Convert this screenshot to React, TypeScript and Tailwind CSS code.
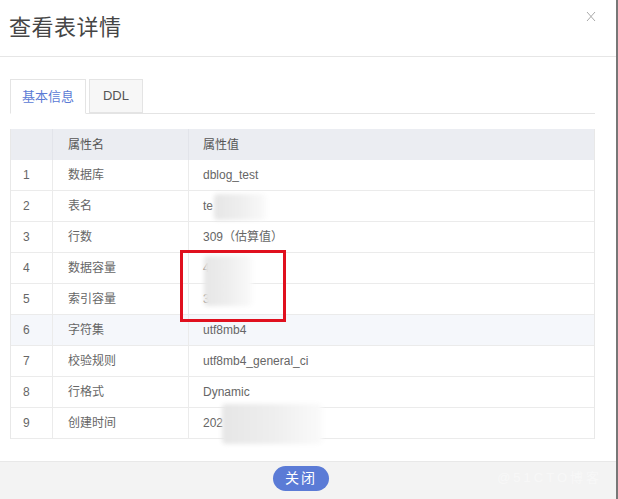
import React from 'react';

const rows: { name: string; value: string }[] = [
  { name: '数据库', value: 'dblog_test' },
  { name: '表名', value: 'te' },
  { name: '行数', value: '309（估算值）' },
  { name: '数据容量', value: '4' },
  { name: '索引容量', value: '3' },
  { name: '字符集', value: 'utf8mb4' },
  { name: '校验规则', value: 'utf8mb4_general_ci' },
  { name: '行格式', value: 'Dynamic' },
  { name: '创建时间', value: '202' },
];

// masked (blurred) patches over sensitive values
const blurs = [
  { left: 214, top: 194, width: 52, height: 26 },
  { left: 204, top: 256, width: 48, height: 50 },
  { left: 222, top: 404, width: 100, height: 40 },
];

export default function App() {
  return (
    <div
      className="relative w-[618px] h-[499px] overflow-hidden bg-white flex"
      style={{ fontFamily: '"Liberation Sans", "Noto Sans CJK SC", sans-serif' }}
    >
      <div className="w-[616px] h-full flex flex-col">
        {/* Header */}
        <div className="relative h-[57px] border-b border-[#e6e6e6] flex items-center px-[9px]">
          <h1 className="text-[22px] text-[#454545] font-normal tracking-[0.5px] mt-[-1px]">查看表详情</h1>
          <button className="absolute right-[20px] top-[11px] leading-none">
            <svg width="10" height="11" viewBox="0 0 10 11" fill="none" stroke="#aaa" strokeWidth="1">
              <path d="M1 1L9 10M9 1L1 10" />
            </svg>
          </button>
        </div>

        {/* Body */}
        <div className="flex-1 px-[10px] pt-[22px] pr-[21px]">
          {/* Tabs */}
          <div className="flex items-end h-[35px] border-b border-[#e4e4e4] gap-[3px]">
            <div className="h-[35px] w-[76px] border border-[#e4e4e4] border-b-white bg-white -mb-px flex items-center justify-center text-[13px] text-[#5b7bd5]">
              基本信息
            </div>
            <div className="h-[34px] w-[54px] border border-[#e4e4e4] bg-[#f7f7f7] flex items-center justify-center text-[13px] text-[#555]">
              DDL
            </div>
          </div>

          {/* Table */}
          <div className="mt-[15px] border-l border-r border-[#e8e8e8] text-[12px]">
            <div className="flex h-[31px] bg-[#ebedf2] text-[#555]">
              <div className="w-[42px] border-r border-[#e2e4ea]" />
              <div className="w-[136px] border-r border-[#e2e4ea] flex items-center pl-[15px]">属性名</div>
              <div className="flex-1 flex items-center pl-[14px]">属性值</div>
            </div>
            {rows.map((r, i) => (
              <div
                key={i}
                className={`flex h-[31px] border-b border-[#ebebeb] text-[#666] ${i === 5 ? 'bg-[#f5f7fb]' : ''}`}
              >
                <div className="w-[42px] border-r border-[#ebebeb] flex items-center pl-[12px]">{i + 1}</div>
                <div className="w-[136px] border-r border-[#ebebeb] flex items-center pl-[15px]">{r.name}</div>
                <div className="flex-1 flex items-center pl-[14px]">{r.value}</div>
              </div>
            ))}
          </div>
        </div>

        {/* Footer */}
        <div className="relative h-[38px] bg-[#f3f3f3] border-t border-[#e8e8e8] flex items-center justify-center">
          <button className="h-[25px] w-[56px] rounded-full bg-[#5b7bd6] text-white text-[14px] tracking-[2px] flex items-center justify-center mt-[-4px] ml-[-14px]">
            关闭
          </button>
          <span className="absolute right-[14px] top-[6px] text-[13px] text-white/40 tracking-[3px]">@51CTO博客</span>
        </div>
      </div>

      {/* Right edge of window */}
      <div className="w-[2px] h-full bg-[#777]" />

      {blurs.map((b, i) => (
        <div
          key={i}
          className="absolute rounded-[4px] bg-gradient-to-r from-[#e6e6e6] via-[#eeeeee] to-[#fafafa] blur-[2px]"
          style={{ left: b.left, top: b.top, width: b.width, height: b.height }}
        />
      ))}

      {/* Red highlight box */}
      <div className="absolute left-[180px] top-[250px] w-[106px] h-[72px] border-[3px] border-[#e0101e]" />
    </div>
  );
}
